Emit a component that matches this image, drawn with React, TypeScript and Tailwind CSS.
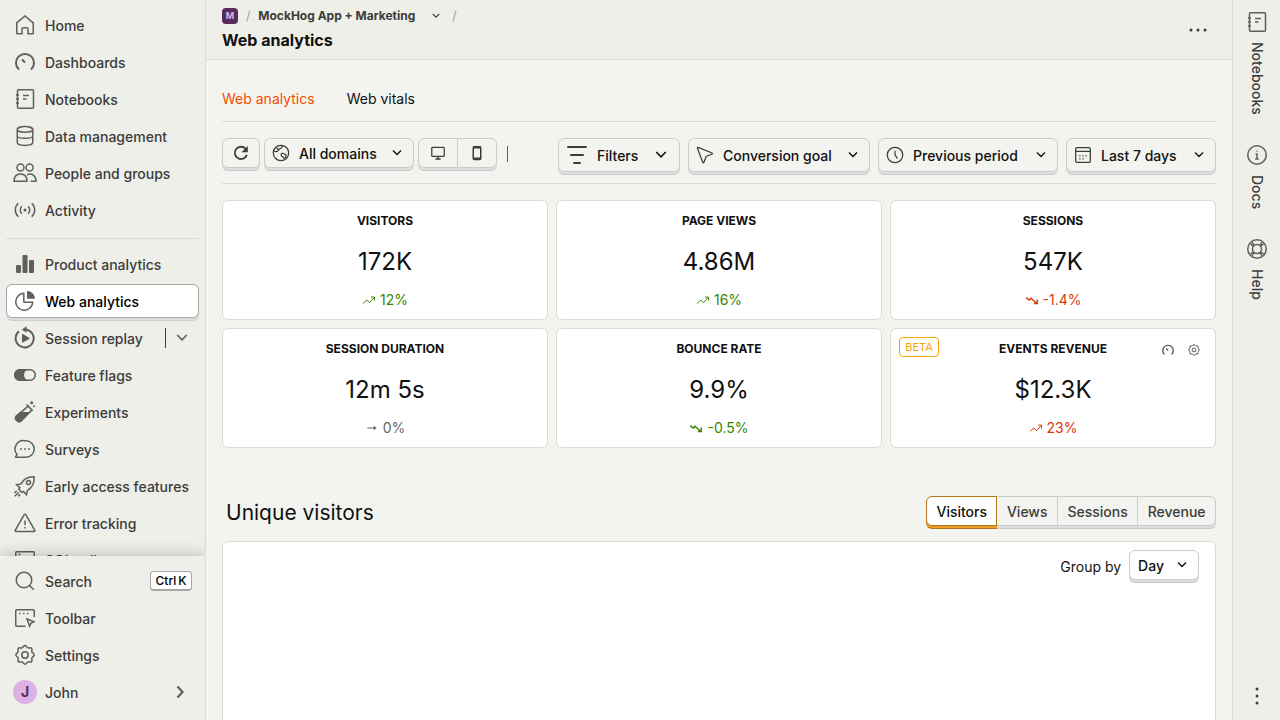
import { useState } from "react";
import type { ReactNode } from "react";

type IconName =
  | "home" | "gauge" | "notebook" | "database" | "people" | "live" | "bars" | "pie" | "replay"
  | "toggle" | "testTube" | "message" | "rocket" | "warning" | "server" | "search" | "toolbar"
  | "gear" | "chevronDown" | "chevronRight" | "refresh" | "globe" | "desktop" | "phone" | "filter"
  | "cursor" | "clock" | "calendar" | "info" | "support" | "ellipsis" | "more" | "trendUp"
  | "trendDown" | "flat";

const gearPath =
  "M12 2.600c1.300 0 1.900 1.900 3 2.300 1.100.4 2.700-.6 3.600.3.9.9-.1 2.500.3 3.600.4 1.100 2.300 1.700 2.300 3.200s-1.900 1.900-2.300 3c-.4 1.100.6 2.700-.3 3.600-.9.9-2.500-.1-3.600.3-1.100.4-1.700 2.300-3 2.300s-1.900-1.900-3-2.300c-1.100-.4-2.700.6-3.600-.3-.9-.9.1-2.500-.3-3.600-.4-1.100-2.300-1.700-2.300-3s1.900-2.100 2.300-3.200c.4-1.100-.6-2.700.3-3.600.9-.9 2.500.1 3.600-.3 1.100-.4 1.700-2.300 3-2.300Z";

const icons: Record<IconName, ReactNode> = {
  home: <path d="M3.750 9.800 12 2.900l8.250 6.900v10.500a.5.5 0 0 1-.5.5H15v-4.600a1.500 1.500 0 0 0-1.500-1.500h-3A1.500 1.500 0 0 0 9 16.200v4.600H4.250a.5.5 0 0 1-.5-.5Z" />,
  gauge: (
    <>
      <path strokeWidth="2" d="M6 19.600a9 9 0 1 1 12 0" />
      <path strokeWidth="2" d="m9 9.500 3 3" />
    </>
  ),
  notebook: (
    <>
      <rect x="4.500" y="2.750" width="16" height="18.500" rx="1" />
      <path d="M3 8h3M3 12h3M3 16h3M10 8.500h6M10 12h3.500" />
    </>
  ),
  database: (
    <>
      <ellipse cx="12" cy="5.400" rx="7.750" ry="2.800" />
      <path d="M4.250 5.400v13.200c0 1.550 3.470 2.800 7.750 2.800s7.750-1.250 7.750-2.800V5.400M4.250 12c0 1.550 3.470 2.300 7.750 2.300s7.750-.75 7.750-2.300" />
    </>
  ),
  people: (
    <>
      <circle cx="7.500" cy="6.500" r="3.500" />
      <circle cx="16.600" cy="6.500" r="3.500" />
      <path d="M1 20.250c0-4.500 2.600-7.250 6.500-7.250s6.500 2.750 6.500 7.250ZM14 13.700c4.900-2 9 1.200 9 6.550h-5.500" />
    </>
  ),
  live: (
    <>
      <circle cx="12" cy="12" r="1.500" fill="currentColor" stroke="none" />
      <path d="M8.800 8.200c-2 2-2 5.600 0 7.600M15.200 8.200c2 2 2 5.600 0 7.600M5.300 5.200c-4 3.700-4 9.900 0 13.600M18.700 5.200c4 3.700 4 9.900 0 13.600" />
    </>
  ),
  bars: (
    <g fill="currentColor" stroke="none">
      <rect x="3" y="13" width="5" height="8" rx="1.200" />
      <rect x="9.500" y="3" width="5" height="18" rx="1.200" />
      <rect x="16" y="8" width="5" height="13" rx="1.200" />
    </g>
  ),
  pie: (
    <>
      <path d="M10.800 4.300a8.500 8.500 0 1 0 8.900 9h-8.400a.5.5 0 0 1-.5-.5Z" />
      <path fill="currentColor" stroke="none" d="M14 2.500c0-.4.3-.7.700-.6 3.900.4 7 3.500 7.200 7.200 0 .4-.3.7-.7.700h-6.500a.7.7 0 0 1-.7-.7Z" />
    </>
  ),
  replay: (
    <>
      <path strokeWidth="2" d="M6 5.400a9 9 0 1 0 6-2" />
      <path fill="currentColor" stroke="none" d="M13.500.3v6.400L8.800 3.500ZM9 8.500c0-.5.5-.7.900-.5l6.600 3.900c.3.200.3.600 0 .8l-6.600 3.900c-.4.200-.9 0-.9-.5Z" />
    </>
  ),
  toggle: (
    <>
      <rect x="1.750" y="6.750" width="20.500" height="10.500" rx="5.250" />
      <path fill="currentColor" stroke="none" d="M7 6h10a6 6 0 0 0 0 12H7A6 6 0 0 1 7 6Z" />
    </>
  ),
  testTube: (
    <>
      <path d="m13.600 4.600 6.200 6.200M15.200 6.200 3.600 15.800a3.400 3.400 0 0 0 4.800 4.800L18.900 9.900" />
      <path fill="currentColor" stroke="none" d="M7.500 12h9.300l-8 9a4 4 0 0 1-5.800-5.600Z" />
      <circle cx="18.700" cy="2.800" r="1.500" fill="currentColor" stroke="none" />
      <circle cx="21" cy="6.300" r="1" fill="currentColor" stroke="none" />
    </>
  ),
  message: (
    <>
      <path d="M12 3.750h1a8 8 0 0 1 0 16.500H3.200c-.6 0-.8-.6-.4-1L4.200 17.600a8.400 8.400 0 0 1 7.800-13.850Z" />
      <path strokeWidth="1.800" strokeLinecap="round" d="M8 12h.01M12 12h.01M16 12h.01" />
    </>
  ),
  rocket: (
    <>
      <path d="M21.200 2.800c-6.500-.3-10.800 2.500-13.200 7.100l-4.400.9 3.200 2.900-1 1.600 3.300 3.200 1.500-1 2.900 3.200 1-4.400c4.500-2.400 7-7 6.700-13.500Z" />
      <circle cx="15.500" cy="8.500" r="2" />
      <path d="m1.500 19 2.200-2.200M1.800 22.300l4-4M5.300 22.300l1.900-1.900" />
    </>
  ),
  warning: (
    <>
      <path d="M11.200 3.700a.9.9 0 0 1 1.600 0l9 15.600a.8.8 0 0 1-.7 1.200H2.900a.8.8 0 0 1-.7-1.200Z" />
      <path d="M12 9.500v4.800M12 16v1.600" />
    </>
  ),
  server: (
    <>
      <rect x="2.750" y="3.750" width="18.500" height="16.500" rx="1" />
      <path d="M5.500 6.500h2M5 9h14" />
    </>
  ),
  search: (
    <>
      <circle cx="11" cy="11" r="7.750" />
      <path d="m16.500 16.500 4.300 4.300" />
    </>
  ),
  toolbar: (
    <>
      <path d="M12.500 20.250H3.750a1 1 0 0 1-1-1V4.750a1 1 0 0 1 1-1h16.500a1 1 0 0 1 1 1V11" />
      <path d="M6 7.500h1.500M10 7.500h1.500M14 7.500h1.500M14 13l7 2.700-3 1.300-1.400 3.200Z" />
    </>
  ),
  gear: (
    <>
      <path d={gearPath} />
      <circle cx="12" cy="12" r="3.200" />
    </>
  ),
  chevronDown: <path strokeWidth="1.600" d="m7.200 9 4.800 4.800L16.800 9" />,
  chevronRight: <path strokeWidth="2.200" d="m9.500 6.500 5 5.500-5 5.500" />,
  refresh: (
    <>
      <path strokeWidth="2.200" d="M17.600 7A7.400 7.400 0 1 0 19 14.300" />
      <path fill="currentColor" stroke="none" d="M20.200 3.500v7.700h-7.700Z" />
    </>
  ),
  globe: (
    <>
      <circle cx="12" cy="12" r="9.250" />
      <path d="M3.500 9.500c2.500 1.500 5.500.5 6-1.500.4-1.600 2.400-1 3.300-2.300.6-.8.600-1.800.4-2.900M9.500 8.500 6.800 6M13 12.500c1.500-.8 2.600.8 4 1 1.200.2 1.500 1.500.8 2.600l-1 1.600c-.6.8-2 .6-2.200-.4-.2-1-1-1-1.700-1.500-1-.8-1-2.600.1-3.300Z" />
    </>
  ),
  desktop: (
    <>
      <rect x="3.700" y="4.500" width="16.600" height="12" rx="1" strokeWidth="1.700" />
      <path strokeWidth="2" d="M8.500 20h7M12 17v3" />
    </>
  ),
  phone: (
    <>
      <rect x="7" y="3.500" width="10" height="17" rx="1.500" strokeWidth="2" />
      <path strokeWidth="3" d="M7 4.500h10M7 19.500h10" />
    </>
  ),
  filter: <path strokeWidth="2" strokeLinecap="round" d="M3 4h18M6 12h12M9 20h6" />,
  cursor: <path d="M2.800 3.600c-.2-.6.3-1 .8-.8l17 6.800c.6.200.6 1 0 1.200l-6 2.400c-.6.300-1.200.8-1.500 1.500L10.600 21c-.3.500-1 .5-1.200 0Z" />,
  clock: (
    <>
      <circle cx="12" cy="12" r="9.250" />
      <path d="M12 7v5l3 4" />
    </>
  ),
  calendar: (
    <>
      <rect x="3.200" y="3.200" width="17.600" height="17.600" rx="1.500" />
      <path d="M3.200 7.500h17.600M7.500 16.500H9M11.250 16.500h1.500M11.250 13h1.500M7.500 13H9M15 13h1.500" />
    </>
  ),
  info: (
    <>
      <circle cx="12" cy="12" r="9.250" />
      <path d="M10.500 11H12v5M10.200 16h3.600M11.500 8.300h1" />
    </>
  ),
  support: (
    <>
      <circle cx="12" cy="12" r="9.250" />
      <circle cx="12" cy="12" r="4.500" />
      <path d="m5.500 7 3.200 2.500M7 5.500l2.500 3.200M18.500 7l-3.200 2.500M17 5.500l-2.500 3.200M5.500 17l3.200-2.500M7 18.500l2.500-3.200M18.500 17l-3.200-2.500M17 18.500l-2.500-3.200" />
    </>
  ),
  ellipsis: (
    <g fill="currentColor" stroke="none">
      <circle cx="5" cy="12" r="1.500" />
      <circle cx="12" cy="12" r="1.500" />
      <circle cx="19" cy="12" r="1.500" />
    </g>
  ),
  more: (
    <g fill="currentColor" stroke="none">
      <circle cx="12" cy="5" r="1.500" />
      <circle cx="12" cy="12" r="1.500" />
      <circle cx="12" cy="19" r="1.500" />
    </g>
  ),
  trendUp: <path strokeWidth="1.700" d="m2 18 6-6 5 4.500 8-9M15.500 7h6v6" />,
  trendDown: <path strokeWidth="2.400" d="m2 8 5 4 3-3 10 8.500M21 11v7h-6" />,
  flat: (
    <>
      <path strokeWidth="1.800" d="M4 12h13" />
      <path fill="currentColor" stroke="none" d="m15 8 5 4-5 4Z" />
    </>
  ),
};

function Icon({ name, className = "size-6" }: { name: IconName; className?: string }) {
  return (
    <svg viewBox="0 0 24 24" fill="none" stroke="currentColor" strokeWidth="1.500" aria-hidden="true" className={`shrink-0 ${className}`}>
      {icons[name]}
    </svg>
  );
}

const raised =
  "border border-[#cccccc] shadow-[0_2px_0_#dfdddd,0_3px_0_#c9c9c9]";

const productLinks: { label: string; icon: IconName }[] = [
  { label: "Product analytics", icon: "bars" },
  { label: "Web analytics", icon: "pie" },
  { label: "Session replay", icon: "replay" },
  { label: "Feature flags", icon: "toggle" },
  { label: "Experiments", icon: "testTube" },
  { label: "Surveys", icon: "message" },
  { label: "Early access features", icon: "rocket" },
  { label: "Error tracking", icon: "warning" },
  { label: "SQL editor", icon: "server" },
];

const mainLinks: { label: string; icon: IconName }[] = [
  { label: "Home", icon: "home" },
  { label: "Dashboards", icon: "gauge" },
  { label: "Notebooks", icon: "notebook" },
  { label: "Data management", icon: "database" },
  { label: "People and groups", icon: "people" },
  { label: "Activity", icon: "live" },
];

function NavLink({ label, icon, active = false }: { label: string; icon: IconName; active?: boolean }) {
  return (
    <a
      href="#"
      aria-current={active ? "page" : undefined}
      className={`flex h-[34px] min-w-0 flex-1 items-center gap-2 rounded-md border pl-1.5 whitespace-nowrap ${
        active
          ? "border-[#a6a6a6] bg-white text-black shadow-[0_2px_0_#dfdddd,0_3px_0_#cfcfcf]"
          : "border-transparent"
      }`}
    >
      <Icon name={icon} className="size-6 text-[#5f5f5d]" />
      <span className="pt-0.5">{label}</span>
    </a>
  );
}

function Sidebar() {
  return (
    <nav className="flex w-[206px] shrink-0 flex-col border-r border-[#dadbd2] bg-[#eeefe9] text-sm font-medium text-[#3c3c3b]">
      <div className="min-h-0 flex-1 overflow-hidden px-1.5 pt-2">
        <ul className="flex flex-col gap-[3px]">
          {mainLinks.map((link) => (
            <li key={link.label} className="flex">
              <NavLink {...link} />
            </li>
          ))}
        </ul>
        <hr className="mt-[11px] mb-2 border-[#dadbd2]" />
        <ul className="flex flex-col gap-[3px]">
          {productLinks.map((link) => (
            <li key={link.label} className="flex items-center">
              <NavLink {...link} active={link.label === "Web analytics"} />
              {link.label === "Session replay" && (
                <button type="button" aria-label="Saved replays" className="flex h-5 items-center border-l border-[#3c3c3b] pr-[5px] pl-1 text-[#5f5f5d]">
                  <Icon name="chevronDown" />
                </button>
              )}
            </li>
          ))}
        </ul>
      </div>
      <ul className="relative flex flex-col gap-[3px] bg-[#eeefe9] px-1.5 pt-2 pb-[11px] shadow-[0_-1px_14px_rgba(0,0,0,0.22)] [clip-path:inset(-16px_0_0_0)]">
        <li className="flex items-center pr-[7px]">
          <NavLink label="Search" icon="search" />
          <kbd className="flex h-5 w-[42px] items-center justify-center gap-0.5 rounded border border-b-2 border-[#a6a6a6] bg-white text-xs text-black [font-family:Inter,sans-serif]">
            <span>Ctrl</span>
            <span>K</span>
          </kbd>
        </li>
        <li className="flex"><NavLink label="Toolbar" icon="toolbar" /></li>
        <li className="flex"><NavLink label="Settings" icon="gear" /></li>
        <li className="flex">
          <button type="button" className="flex h-[34px] flex-1 items-center gap-2 pr-[7px] pl-[7px] text-left">
            <span className="flex size-6 items-center justify-center rounded-full bg-[#dcb1e3] font-bold text-[#572b5c]">J</span>
            <span className="flex-1 pt-0.5">John</span>
            <Icon name="chevronRight" className="size-6 text-[#5f5f5d]" />
          </button>
        </li>
      </ul>
    </nav>
  );
}

function Header() {
  return (
    <header className="flex h-[60px] items-center justify-between border-b border-[#dadbd2] bg-[#eeefe9] px-4">
      <div>
        <div className="flex h-5 items-center gap-2 text-xs font-bold text-[#3c3c3b]">
          <span className="flex size-4 items-center justify-center rounded bg-[#572b5c] text-[9px] text-[#dcb1e3]">M</span>
          <span className="font-normal text-[#9a9b95]">/</span>
          <button type="button" className="flex w-[186px] items-center justify-between">
            MockHog App + Marketing
            <Icon name="chevronDown" className="size-4" />
          </button>
          <span className="font-normal text-[#9a9b95]">/</span>
        </div>
        <h1 className="text-base leading-7 font-bold text-[#111111]">Web analytics</h1>
      </div>
      <button type="button" aria-label="More options" className="flex px-1.5 text-[#3c3c3b]">
        <Icon name="ellipsis" />
      </button>
    </header>
  );
}

function MenuButton({ label, icon, large = false, className }: { label: string; icon: IconName; large?: boolean; className: string }) {
  return (
    <button type="button" aria-haspopup="menu" className={`flex h-[34px] items-center gap-2 rounded-md bg-[#f3f4ef] px-1.5 text-left text-sm font-medium whitespace-nowrap ${raised} ${className}`}>
      <Icon name={icon} className={large ? "size-6 text-[#3c3c3b]" : "size-5 text-[#3c3c3b]"} />
      <span className="flex-1 pt-0.5">{label}</span>
      <Icon name="chevronDown" className={large ? "size-6" : "size-5"} />
    </button>
  );
}

function SelectField({
  label, icon, options, className,
}: { label: string; icon: IconName; options: string[]; className: string }) {
  return (
    <div className="relative flex">
      <Icon name={icon} className="pointer-events-none absolute top-0 bottom-0 left-[7px] my-auto size-5 text-[#3c3c3b]" />
      <select aria-label={label} className={`appearance-none rounded-md bg-transparent pt-0.5 pr-[30px] pl-[34px] text-sm font-medium ${raised} ${className}`}>
        {options.map((option) => <option key={option}>{option}</option>)}
      </select>
      <Icon name="chevronDown" className="pointer-events-none absolute top-0 right-[7px] bottom-0 my-auto size-5" />
    </div>
  );
}

function Toolbar() {
  const device = `flex h-[30px] w-10 items-center justify-center text-[#3c3c3b] ${raised}`;
  return (
    <div className="flex items-start justify-between border-b border-[#dadbd2] pt-4 pb-[11px]">
      <div className="flex gap-1">
        <button type="button" aria-label="Reload" className={`flex h-[30px] w-[38px] items-center justify-center rounded-md text-[#3c3c3b] ${raised}`}>
          <Icon name="refresh" className="size-5" />
        </button>
        <SelectField label="Domain" icon="globe" options={["All domains", "mockhog.com"]} className="h-[30px] w-[150px]" />
        <div className="flex">
          <button type="button" aria-label="Desktop" className={`rounded-l-md ${device}`}>
            <Icon name="desktop" className="size-[18px]" />
          </button>
          <button type="button" aria-label="Mobile" className={`-ml-px rounded-r-md ${device}`}>
            <Icon name="phone" className="size-[18px]" />
          </button>
        </div>
        <span className="mt-2 ml-1.5 h-4 w-px bg-[#5f5f5d]" />
      </div>
      <div className="flex gap-2">
        <MenuButton label="Filters" icon="filter" large className="w-[122px]" />
        <MenuButton label="Conversion goal" icon="cursor" className="w-[182px]" />
        <SelectField label="Comparison" icon="clock" options={["Previous period", "Previous year"]} className="h-[34px] w-[180px]" />
        <SelectField label="Date range" icon="calendar" options={["Last 7 days", "Yesterday"]} className="h-[34px] w-[150px]" />
      </div>
    </div>
  );
}

type Metric = { label: string; value: string; change: string; trend: IconName; tone: string; beta?: boolean };

const metrics: Metric[] = [
  { label: "Visitors", value: "172K", change: "12%", trend: "trendUp", tone: "text-[#388600]" },
  { label: "Page views", value: "4.86M", change: "16%", trend: "trendUp", tone: "text-[#388600]" },
  { label: "Sessions", value: "547K", change: "-1.4%", trend: "trendDown", tone: "text-[#db3707]" },
  { label: "Session duration", value: "12m 5s", change: "0%", trend: "flat", tone: "text-[#666666]" },
  { label: "Bounce rate", value: "9.9%", change: "-0.5%", trend: "trendDown", tone: "text-[#388600]" },
  { label: "Events revenue", value: "$12.3K", change: "23%", trend: "trendUp", tone: "text-[#db3707]", beta: true },
];

function MetricCard({ metric }: { metric: Metric }) {
  return (
    <article className="relative flex h-[120px] flex-col items-center justify-between rounded-md border border-[#dadbd2] bg-white px-2 pt-[11px] pb-[9px]">
      {metric.beta && (
        <>
          <span className="absolute top-2 left-2 flex h-5 w-10 items-center justify-center rounded border border-[#f7a501] text-[11px] text-[#f7a501]">BETA</span>
          <div className="absolute top-3.5 right-3.5 flex gap-3 text-[#3c3c3b]">
            <button type="button" aria-label="Revenue dashboard" className="flex"><Icon name="gauge" className="size-3.5" /></button>
            <button type="button" aria-label="Revenue settings" className="flex"><Icon name="gear" className="size-3.5" /></button>
          </div>
        </>
      )}
      <h3 className="text-xs leading-[18px] font-bold uppercase">{metric.label}</h3>
      <p className="pt-1 text-2xl leading-8">{metric.value}</p>
      <p className={`flex items-center gap-1 text-sm leading-5 ${metric.tone}`}>
        <Icon name={metric.trend} className="size-3.5" />
        {metric.change}
      </p>
    </article>
  );
}

function UniqueVisitors() {
  const [view, setView] = useState("Visitors");
  return (
    <section className="mt-12">
      <div className="flex items-start justify-between">
        <h2 className="ml-1 pt-px text-[21px] leading-8">Unique visitors</h2>
        <div className="flex w-[290px] text-sm font-medium">
          {["Visitors", "Views", "Sessions", "Revenue"].map((name) => (
            <button
              key={name}
              type="button"
              aria-pressed={view === name}
              onClick={() => setView(name)}
              className={`-ml-px h-[30px] flex-auto border px-1 pt-0.5 first:ml-0 first:rounded-l-md last:rounded-r-md ${
                view === name
                  ? "relative border-[#b17816] bg-white shadow-[0_2px_0_#eb9d2a,0_3px_0_#b17816]"
                  : "border-[#cccccc] text-[#3c3c3b] shadow-[0_2px_0_#dfdddd,0_3px_0_#c9c9c9]"
              }`}
            >
              {name}
            </button>
          ))}
        </div>
      </div>
      <div className="mt-3 flex h-[400px] items-start justify-end rounded-md border border-[#dadbd2] bg-white px-4 pt-2">
        <label htmlFor="interval" className="mr-2 text-sm leading-[34px]">Group by</label>
        <div className="relative">
          <select id="interval" className={`field-sizing-content block h-[30px] appearance-none rounded-md bg-white pt-0.5 pr-[34px] pl-2 text-sm font-medium ${raised}`}>
            <option>Day</option>
            <option>Week</option>
            <option>Month</option>
          </select>
          <Icon name="chevronDown" className="pointer-events-none absolute top-[5px] right-[7px] size-5" />
        </div>
      </div>
    </section>
  );
}

function SidePanel() {
  const tabs: { label: string; icon: IconName }[] = [
    { label: "Notebooks", icon: "notebook" },
    { label: "Docs", icon: "info" },
    { label: "Help", icon: "support" },
  ];
  return (
    <aside className="flex w-12 shrink-0 flex-col items-center justify-between border-l border-[#dadbd2] bg-[#eeefe9] pt-2.5 pb-3 text-sm font-medium text-[#3c3c3b]">
      <div className="flex flex-col items-center gap-7">
        {tabs.map((tab) => (
          <button key={tab.label} type="button" className="flex flex-col items-center gap-2">
            <Icon name={tab.icon} className="size-6 text-[#5f5f5d]" />
            <span className="[writing-mode:vertical-rl]">{tab.label}</span>
          </button>
        ))}
      </div>
      <button type="button" aria-label="More panels" className="flex"><Icon name="more" /></button>
    </aside>
  );
}

export default function App() {
  return (
    <div className="flex h-screen overflow-hidden bg-[#f3f4ef] text-[#111111] [font-family:Inter,sans-serif]">
      <Sidebar />
      <div className="flex min-w-0 flex-1 flex-col">
        <Header />
        <main className="min-h-0 flex-1 overflow-hidden px-4">
          <nav className="flex h-[62px] items-center gap-8 border-b border-[#dadbd2] pt-4 text-sm">
            <a href="#" aria-current="page" className="text-[#f54e00]">Web analytics</a>
            <a href="#">Web vitals</a>
          </nav>
          <Toolbar />
          <div className="mt-4 grid grid-cols-3 gap-2">
            {metrics.map((metric) => <MetricCard key={metric.label} metric={metric} />)}
          </div>
          <UniqueVisitors />
        </main>
      </div>
      <SidePanel />
    </div>
  );
}
